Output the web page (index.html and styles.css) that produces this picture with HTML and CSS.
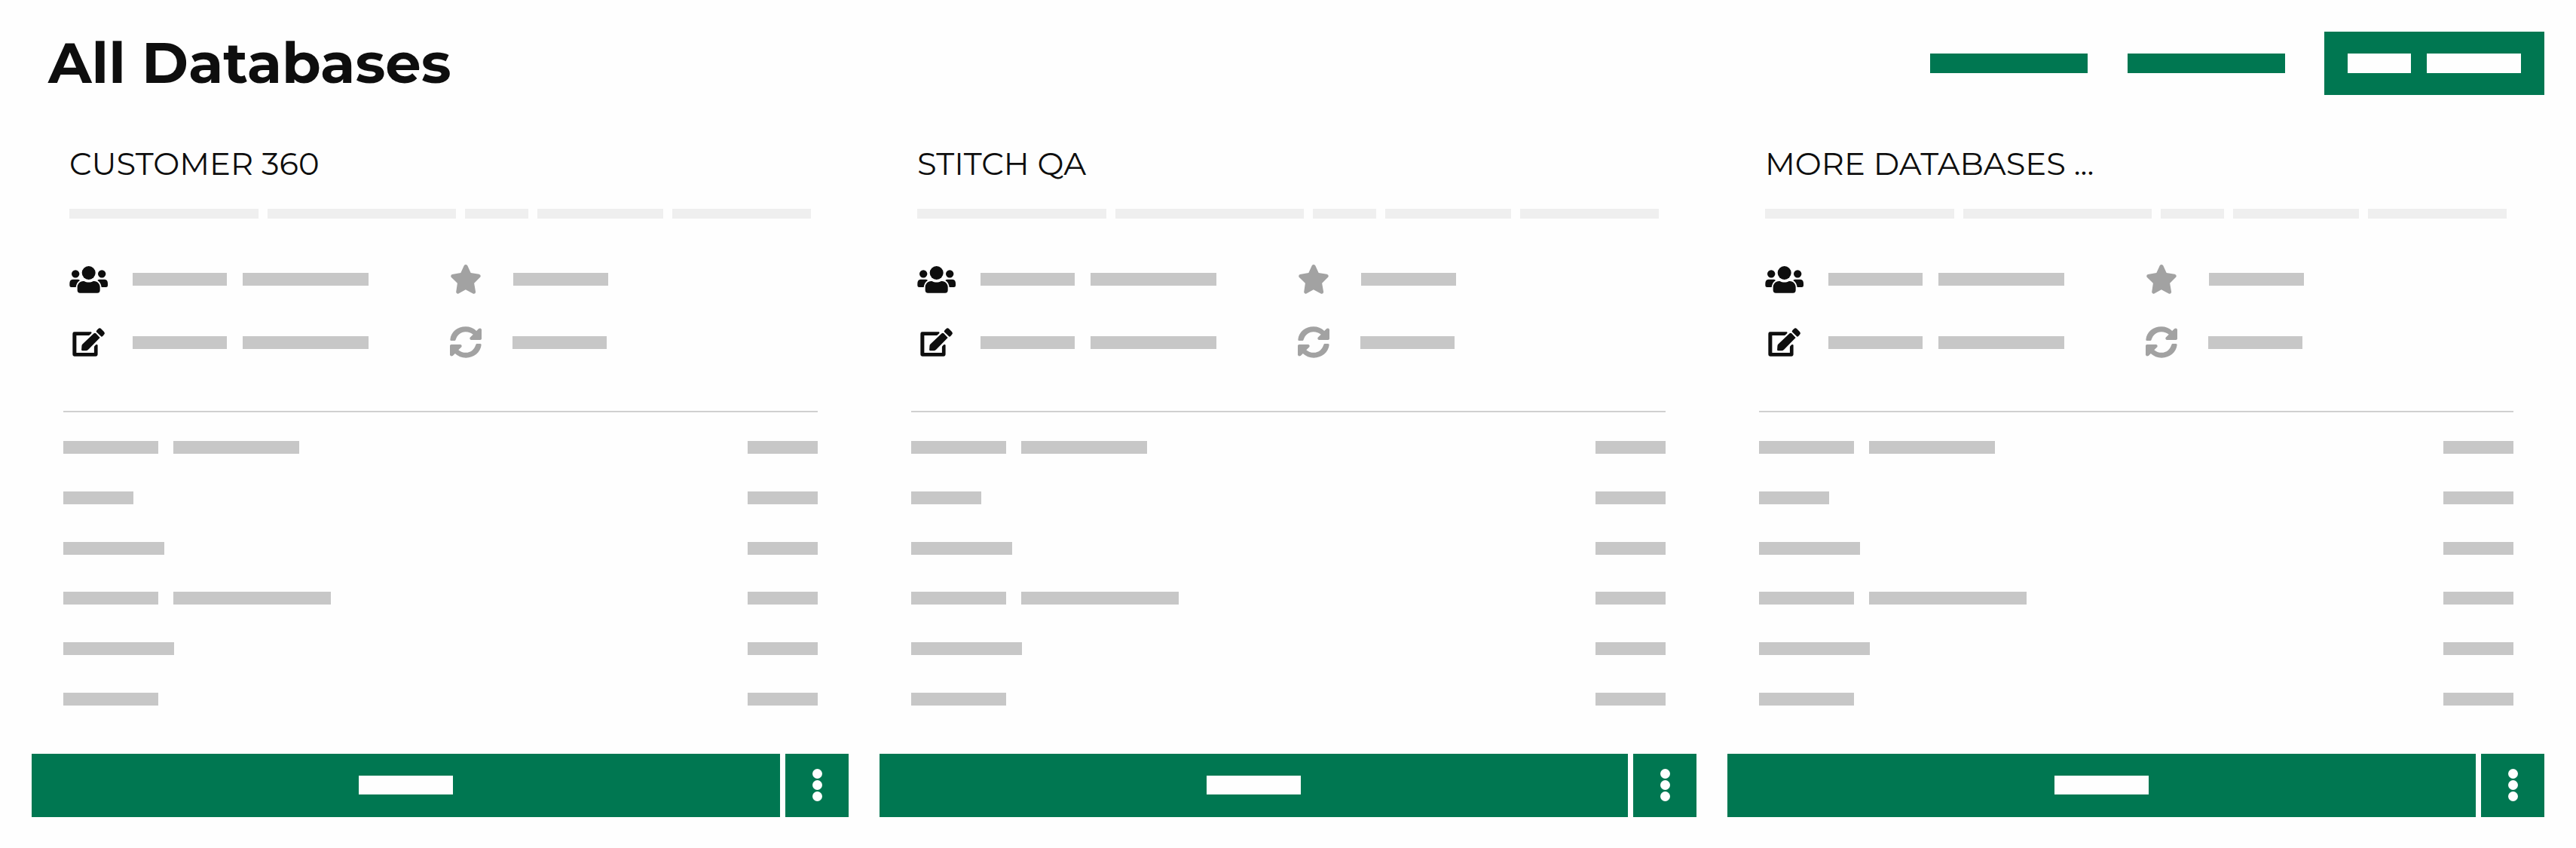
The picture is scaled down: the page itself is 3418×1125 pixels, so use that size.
FILE: index.html
```html
<!DOCTYPE html>
<html lang="en">
<head>
<meta charset="utf-8">
<title>All Databases</title>
<link rel="stylesheet" href="styles.css">
</head>
<body>
<svg class="sprite" aria-hidden="true">
  <symbol id="users" viewBox="66 69 153 108" preserveAspectRatio="none">
    <circle cx="143" cy="96" r="27"/><circle cx="90.5" cy="100" r="15.5"/><circle cx="195.5" cy="100" r="15.5"/>
    <path d="M121 129H125C136 135 150 135 161 129H165C179 130 188 141 188 152V165Q188 176 177 176H109Q98 176 98 165V152C98 141 107 130 121 129Z"/>
    <path d="M79 122H100Q105 122 108 126C98 132 94 142 92 153H74Q67 153 67 146V138Q67 123 79 122Z"/>
    <path d="M207 122H186Q181 122 178 126C188 132 192 142 194 153H212Q219 153 219 146V138Q219 123 207 122Z"/>
  </symbol>
  <symbol id="edit" viewBox="79 315 128 114" preserveAspectRatio="none">
    <path d="M153 331H87Q80 331 80 338V421Q80 428 87 428H172Q179 428 179 421V383Q176 379 172 382L167 387Q165 389 165 392V414H95V345H143Q146 345 148 343L154 337Q157 332 153 331Z"/>
    <path d="M164 337Q168 333 172 337L188 354L142 401Q137 406 132 406H119Q115 406 115 402L116 387Q116 383 120 379Z"/>
    <path d="M173 330Q173 325 182 318Q187 314 192 318L203 329Q208 334 206 339Q199 350 194 350Z"/>
  </symbol>
  <symbol id="star" viewBox="80 66 117 114" preserveAspectRatio="none">
    <path d="M132 70Q138 62 145 70L158 98L190 103Q199 107 195 114L171 138L177 173Q175 181 168 179L138 163L109 179Q102 180 101 173L106 138L82 115Q78 107 86 104L119 98Z"/>
  </symbol>
  <symbol id="sync" viewBox="77 308 123 128" preserveAspectRatio="none">
    <path id="arrow" d="M78 361C81 331 106 309 138 309Q163 309 180 326L189 317Q198 313 200 321V358Q199 362 195 363H159Q152 360 155 353L167 341Q155 330 138 330C119 330 105 343 99 363Q98 366 95 366H82Q78 366 78 361Z"/>
    <use href="#arrow" transform="rotate(180 138.5 372)"/>
  </symbol>
</svg>

<header class="header">
  <h1 class="heading">All Databases</h1>
  <nav class="nav">
    <a class="link"></a>
    <a class="link"></a>
    <a class="create"><i class="w84"></i><i class="w125"></i></a>
  </nav>
</header>

<main class="cards">
  <section class="card">
    <h2 class="title">CUSTOMER 360</h2>
    <div class="tags"><i class="w251"></i><i class="w250"></i><i class="w84"></i><i class="w167"></i><i class="w184"></i></div>
    <div class="facts">
      <svg class="icon users"><use href="#users"/></svg><div class="bars"><i class="w125"></i><i class="w167"></i></div>
      <svg class="icon star"><use href="#star"/></svg><div class="bars late"><i class="w126"></i></div>
      <svg class="icon edit"><use href="#edit"/></svg><div class="bars"><i class="w125"></i><i class="w167"></i></div>
      <svg class="icon sync"><use href="#sync"/></svg><div class="bars"><i class="w125"></i></div>
    </div>
    <div class="list">
      <div class="row"><i class="w126"></i><i class="w167"></i><i class="end"></i></div>
      <div class="row"><i class="w93"></i><i class="end"></i></div>
      <div class="row"><i class="w134"></i><i class="end"></i></div>
      <div class="row"><i class="w126"></i><i class="w209"></i><i class="end"></i></div>
      <div class="row"><i class="w147"></i><i class="end"></i></div>
      <div class="row"><i class="w126"></i><i class="end"></i></div>
    </div>
    <footer class="actions"><div class="open"><i class="w125"></i></div><div class="menu"><b></b><b></b><b></b></div></footer>
  </section>

  <section class="card">
    <h2 class="title">STITCH QA</h2>
    <div class="tags"><i class="w251"></i><i class="w250"></i><i class="w84"></i><i class="w167"></i><i class="w184"></i></div>
    <div class="facts">
      <svg class="icon users"><use href="#users"/></svg><div class="bars"><i class="w125"></i><i class="w167"></i></div>
      <svg class="icon star"><use href="#star"/></svg><div class="bars late"><i class="w126"></i></div>
      <svg class="icon edit"><use href="#edit"/></svg><div class="bars"><i class="w125"></i><i class="w167"></i></div>
      <svg class="icon sync"><use href="#sync"/></svg><div class="bars"><i class="w125"></i></div>
    </div>
    <div class="list">
      <div class="row"><i class="w126"></i><i class="w167"></i><i class="end"></i></div>
      <div class="row"><i class="w93"></i><i class="end"></i></div>
      <div class="row"><i class="w134"></i><i class="end"></i></div>
      <div class="row"><i class="w126"></i><i class="w209"></i><i class="end"></i></div>
      <div class="row"><i class="w147"></i><i class="end"></i></div>
      <div class="row"><i class="w126"></i><i class="end"></i></div>
    </div>
    <footer class="actions"><div class="open"><i class="w125"></i></div><div class="menu"><b></b><b></b><b></b></div></footer>
  </section>

  <section class="card">
    <h2 class="title">MORE DATABASES ...</h2>
    <div class="tags"><i class="w251"></i><i class="w250"></i><i class="w84"></i><i class="w167"></i><i class="w184"></i></div>
    <div class="facts">
      <svg class="icon users"><use href="#users"/></svg><div class="bars"><i class="w125"></i><i class="w167"></i></div>
      <svg class="icon star"><use href="#star"/></svg><div class="bars late"><i class="w126"></i></div>
      <svg class="icon edit"><use href="#edit"/></svg><div class="bars"><i class="w125"></i><i class="w167"></i></div>
      <svg class="icon sync"><use href="#sync"/></svg><div class="bars"><i class="w125"></i></div>
    </div>
    <div class="list">
      <div class="row"><i class="w126"></i><i class="w167"></i><i class="end"></i></div>
      <div class="row"><i class="w93"></i><i class="end"></i></div>
      <div class="row"><i class="w134"></i><i class="end"></i></div>
      <div class="row"><i class="w126"></i><i class="w209"></i><i class="end"></i></div>
      <div class="row"><i class="w147"></i><i class="end"></i></div>
      <div class="row"><i class="w126"></i><i class="end"></i></div>
    </div>
    <footer class="actions"><div class="open"><i class="w125"></i></div><div class="menu"><b></b><b></b><b></b></div></footer>
  </section>
</main>
</body>
</html>
```
FILE: styles.css
```css
* { box-sizing: border-box; }
body {
  margin: 0;
  padding: 42px 42px 0;
  height: 1125px;
  overflow: hidden;
  background: #fefefe;
  color: #0e0e0e;
  font-family: Montserrat, Inter, sans-serif;
}
.sprite { display: none; }
i { display: block; flex: none; }

.w84 { width: 84px; }
.w93 { width: 93px; }
.w125 { width: 125px; }
.w126 { width: 126px; }
.w134 { width: 134px; }
.w147 { width: 147px; }
.w167 { width: 167px; }
.w184 { width: 184px; }
.w209 { width: 209px; }
.w250 { width: 250px; }
.w251 { width: 251px; }

.header {
  display: flex;
  justify-content: space-between;
  width: 3334px;
  height: 84px;
}
.heading {
  margin: 0;
  padding-left: 22px;
  font-size: 75.1px;
  line-height: 82px;
  font-weight: 700;
  white-space: nowrap;
}
.nav { display: flex; align-items: center; }
.link {
  width: 209px;
  height: 26px;
  margin-right: 53px;
  background: #007751;
}
.link + .link { margin-right: 52px; }
.create {
  display: flex;
  align-items: center;
  gap: 21px;
  width: 292px;
  height: 84px;
  padding-left: 31px;
  background: #007751;
}
.create i { height: 26px; background: #fefefe; }

.cards {
  display: grid;
  grid-template-columns: repeat(3, 1084px);
  column-gap: 41px;
}
.card { display: flex; flex-direction: column; }
.title {
  height: 50px;
  margin: 66px 0 35px;
  padding-left: 50px;
  font-size: 41.7px;
  line-height: 50px;
  font-weight: 400;
  white-space: nowrap;
}
.tags {
  display: flex;
  gap: 12px;
  height: 13px;
  padding-left: 50px;
}
.tags i { background: #efefef; }

.facts {
  display: grid;
  grid-template-columns: 84px 412px 92px 1fr;
  grid-template-rows: 83px 84px;
  align-items: center;
  height: 167px;
  margin-top: 39px;
  padding-left: 50px;
}
.icon { display: block; fill: #0e0e0e; }
.users { width: 51px; height: 36px; }
.edit { width: 43px; height: 38px; margin: -1px 0 0 4px; }
.star { width: 40px; height: 39px; margin-left: 10px; fill: #a2a2a2; }
.sync { width: 42px; height: 42px; margin: -1px 0 0 9px; fill: #a2a2a2; }
.bars { display: flex; gap: 21px; }
.bars i { height: 17px; background: #c7c7c7; }
.late { padding-left: 1px; }

.list {
  display: grid;
  grid-template-rows: repeat(6, 66.75px);
  margin: 49px 41px 0 42px;
  padding-top: 13.3px;
  border-top: 2px solid #d0d0d0;
}
.row { display: flex; align-items: center; gap: 20px; }
.row i { height: 17px; background: #c7c7c7; }
.row .end { width: 93px; margin-left: auto; }

.actions {
  display: flex;
  gap: 7px;
  height: 84px;
  margin-top: 39.2px;
}
.open {
  display: flex;
  align-items: center;
  justify-content: center;
  width: 993px;
  padding-bottom: 1px;
  background: #007751;
}
.open i { height: 25px; background: #fefefe; }
.menu {
  display: flex;
  flex-direction: column;
  align-items: center;
  justify-content: center;
  gap: 2px;
  width: 84px;
  background: #007751;
}
.menu b {
  width: 13px;
  height: 13px;
  border-radius: 50%;
  background: #fefefe;
}
```
